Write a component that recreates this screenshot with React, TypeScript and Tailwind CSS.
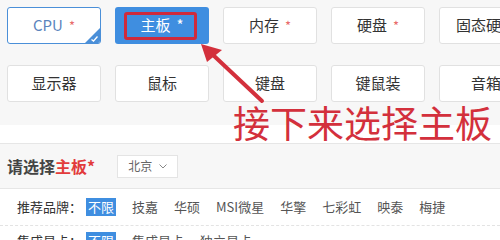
import React from "react";

const row1 = [
  { t: "CPU", star: true, state: "done" },
  { t: "主板", star: true, state: "active" },
  { t: "内存", star: true, state: "" },
  { t: "硬盘", star: true, state: "" },
  { t: "固态硬盘", star: false, state: "" },
];
const row2 = ["显示器", "鼠标", "键盘", "键鼠装", "音箱"];
const brands = ["技嘉", "华硕", "MSI微星", "华擎", "七彩虹", "映泰", "梅捷"];

function Btn({ t, star, state }: { t: string; star?: boolean; state?: string }) {
  if (state === "active") {
    return (
      <div className="relative flex h-[37px] w-[94px] shrink-0 items-center justify-center rounded-[3px] bg-[#3f8ee0] text-[15px] text-white">
        <span>{t}</span>
        {star && <span className="ml-[6px] text-[15px]">*</span>}
        <div className="absolute left-[9px] top-[5px] h-[28px] w-[73px] rounded-[3px] border-[3px] border-[#cf2a3c]" />
      </div>
    );
  }
  if (state === "done") {
    return (
      <div className="relative flex h-[37px] w-[94px] shrink-0 items-center justify-center overflow-hidden rounded-[3px] border border-[#4a8fd8] bg-white text-[15px] text-[#5b84bd]">
        <span>{t}</span>
        {star && <span className="ml-[6px] text-[13px] text-[#e86a6a]">*</span>}
        <svg className="absolute bottom-0 right-0" width="15" height="15" viewBox="0 0 15 15">
          <path d="M15 0 L15 15 L0 15 Z" fill="#4a8fd8" />
          <path d="M6.5 11.5 L8.5 13 L12.5 8.5" stroke="#fff" strokeWidth="1.3" fill="none" />
        </svg>
      </div>
    );
  }
  return (
    <div className="flex h-[37px] w-[94px] shrink-0 items-center justify-center whitespace-nowrap rounded-[3px] border border-[#e1e1e1] bg-white text-[15px] text-[#333]">
      <span>{t}</span>
      {star && <span className="ml-[6px] text-[13px] text-[#e86a6a]">*</span>}
    </div>
  );
}

export default function App() {
  return (
    <div
      className="relative h-[240px] w-[500px] overflow-hidden bg-white"
      style={{ fontFamily: '"Noto Sans CJK SC", "Noto Sans", sans-serif' }}
    >
      <div className="flex h-[125px] flex-col gap-[21px] bg-[#f7f7f7] pl-[7px] pt-[7px]">
        <div className="flex gap-[14px]">
          {row1.map((b) => (
            <Btn key={b.t} {...b} />
          ))}
        </div>
        <div className="flex gap-[14px]">
          {row2.map((t) => (
            <Btn key={t} t={t} />
          ))}
        </div>
      </div>
      <div className="h-[18px] bg-white" />
      <div className="flex h-[46px] items-center gap-[22px] border-y border-[#e6e6e6] bg-[#f7f7f7] pl-[7px]">
        <div className="text-[16px] font-bold leading-none text-[#444]">
          请选择<span className="text-[#e23b3b]">主板*</span>
        </div>
        <div className="flex h-[23px] w-[61px] items-center justify-center gap-[7px] border border-[#e4e4e4] bg-white text-[12px] text-[#666]">
          <span>北京</span>
          <svg width="8" height="5" viewBox="0 0 8 5">
            <path d="M0.5 0.5 L4 4 L7.5 0.5" stroke="#888" strokeWidth="1" fill="none" />
          </svg>
        </div>
      </div>
      <div className="flex h-[37px] items-center border-b border-dashed border-[#e3e3e3] pl-[17px] text-[13px]">
        <span className="w-[69px] text-[#333]">推荐品牌：</span>
        <span className="flex h-[18px] w-[30px] items-center justify-center bg-[#3f8ee0] text-white">不限</span>
        <div className="ml-[16px] flex gap-[16px] text-[#555]">
          {brands.map((b) => (
            <span key={b}>{b}</span>
          ))}
        </div>
      </div>
      <div className="flex h-[30px] items-center pl-[17px] text-[13px]">
        <span className="w-[69px] text-[#333]">集成显卡：</span>
        <span className="flex h-[18px] w-[30px] items-center justify-center bg-[#3f8ee0] text-white">不限</span>
        <div className="ml-[16px] flex gap-[16px] text-[#555]">
          <span>集成显卡</span>
          <span>独立显卡</span>
        </div>
      </div>

      <div className="absolute left-[233px] top-[104px] text-[37px] leading-none text-[#d3303c]">
        接下来选择主板
      </div>
      <svg className="absolute left-0 top-0" width="500" height="240" viewBox="0 0 500 240">
        <line x1="262" y1="101" x2="212" y2="54" stroke="#d3303c" strokeWidth="4" strokeLinecap="round" />
        <path d="M201 44 L222 50 L207 62 Z" fill="#d3303c" />
      </svg>
    </div>
  );
}
